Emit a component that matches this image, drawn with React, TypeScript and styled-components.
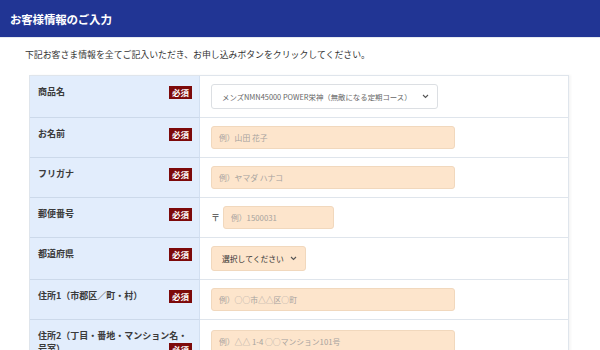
import React from "react";
import styled, { createGlobalStyle } from "styled-components";

const GlobalStyle = createGlobalStyle`
  body {
    margin: 0;
    background: #ffffff;
    font-family: "Noto Sans CJK JP", "Noto Sans", sans-serif;
    color: #333;
  }
`;

const Header = styled.header`
  height: 37px;
  background: #213594;
  border-bottom: 1px solid #e6eaf0;
  display: flex;
  align-items: center;
  padding-left: 10px;
`;

const Title = styled.h1`
  margin: 0;
  font-size: 11.5px;
  font-weight: 700;
  color: #fff;
  letter-spacing: -0.2px;
`;

const Content = styled.div`
  padding: 10px 31px 0 25px;
`;

const Intro = styled.p`
  margin: 0 0 14px;
  font-size: 8.9px;
  line-height: 13px;
  color: #333;
`;

const Table = styled.div`
  margin-left: 4px;
  border: 1px solid #dfe5ec;
  box-shadow: 2px 0 2px rgba(0, 0, 0, 0.04);
`;

const Row = styled.div`
  display: grid;
  grid-template-columns: 170px 1fr;
  border-bottom: 1px solid #dfe5ec;
`;

const Label = styled.div`
  background: #e2edfc;
  border-right: 1px solid #d3e0f1;
  border-bottom: 1px solid #ccd9ea;
  margin-bottom: -1px;
  padding: 9px 7px 6px 8px;
  font-size: 9px;
  line-height: 13px;
  font-weight: 700;
  color: #3a3a3a;
`;

const Badge = styled.span`
  float: right;
  width: 23px;
  height: 13px;
  background: #7d0a0a;
  color: #fff;
  font-size: 8.5px;
  font-weight: 700;
  line-height: 13px;
  text-align: center;
  margin-top: 1px;
`;

const Field = styled.div`
  display: flex;
  align-items: center;
  gap: 3px;
  padding: 8px 11px 8px 11px;
`;

const Input = styled.input<{ $width: number }>`
  box-sizing: border-box;
  width: ${(p) => p.$width}px;
  height: 23px;
  background: #fde5cc;
  border: 1px solid #f1d8bd;
  border-radius: 3px;
  padding: 0 7px;
  font-family: inherit;
  font-size: 7.8px;
  color: #333;
  outline: none;
  &::placeholder {
    color: #a7a39e;
  }
`;

const SelectBox = styled.div<{ $width: number; $peach?: boolean }>`
  box-sizing: border-box;
  width: ${(p) => p.$width}px;
  height: 25px;
  display: flex;
  align-items: center;
  justify-content: space-between;
  padding: 0 8px 0 10px;
  border-radius: 3px;
  background: ${(p) => (p.$peach ? "#fde5cc" : "#fff")};
  border: 1px solid ${(p) => (p.$peach ? "#f1d8bd" : "#dcdfe3")};
  font-size: ${(p) => (p.$peach ? "7.8px" : "7.4px")};
  color: ${(p) => (p.$peach ? "#333" : "#666")};
  white-space: nowrap;
`;

const Postal = styled.span`
  font-size: 9px;
  color: #444;
`;

const Chevron = () => (
  <svg width="7" height="5" viewBox="0 0 7 5" fill="none">
    <path d="M1 1l2.5 2.5L6 1" stroke="#555" strokeWidth="1.1" />
  </svg>
);

type FieldDef =
  | { kind: "input"; placeholder: string; width: number; postal?: boolean }
  | { kind: "select"; text: string; width: number; peach?: boolean };

const rows: { label: string; field: FieldDef }[] = [
  {
    label: "商品名",
    field: {
      kind: "select",
      text: "メンズNMN45000 POWER栄神（無敵になる定期コース）",
      width: 227,
    },
  },
  { label: "お名前", field: { kind: "input", placeholder: "例）山田 花子", width: 244 } },
  { label: "フリガナ", field: { kind: "input", placeholder: "例）ヤマダ ハナコ", width: 244 } },
  {
    label: "郵便番号",
    field: { kind: "input", placeholder: "例）1500031", width: 111, postal: true },
  },
  {
    label: "都道府県",
    field: { kind: "select", text: "選択してください", width: 95, peach: true },
  },
  {
    label: "住所1（市郡区／町・村）",
    field: { kind: "input", placeholder: "例）○○市△△区○町", width: 244 },
  },
  {
    label: "住所2（丁目・番地・マンション名・号室）",
    field: { kind: "input", placeholder: "例）△△ 1-4 ○○マンション101号", width: 244 },
  },
];

export default function App() {
  return (
    <>
      <GlobalStyle />
      <Header>
        <Title>お客様情報のご入力</Title>
      </Header>
      <Content>
        <Intro>
          下記お客さま情報を全てご記入いただき、お申し込みボタンをクリックしてください。
        </Intro>
        <Table>
          {rows.map((r) => (
            <Row key={r.label}>
              <Label>
                {r.label}
                <Badge>必須</Badge>
              </Label>
              <Field>
                {r.field.kind === "select" ? (
                  <SelectBox $width={r.field.width} $peach={r.field.peach}>
                    <span>{r.field.text}</span>
                    <Chevron />
                  </SelectBox>
                ) : (
                  <>
                    {r.field.postal && <Postal>〒</Postal>}
                    <Input $width={r.field.width} placeholder={r.field.placeholder} />
                  </>
                )}
              </Field>
            </Row>
          ))}
        </Table>
      </Content>
    </>
  );
}
